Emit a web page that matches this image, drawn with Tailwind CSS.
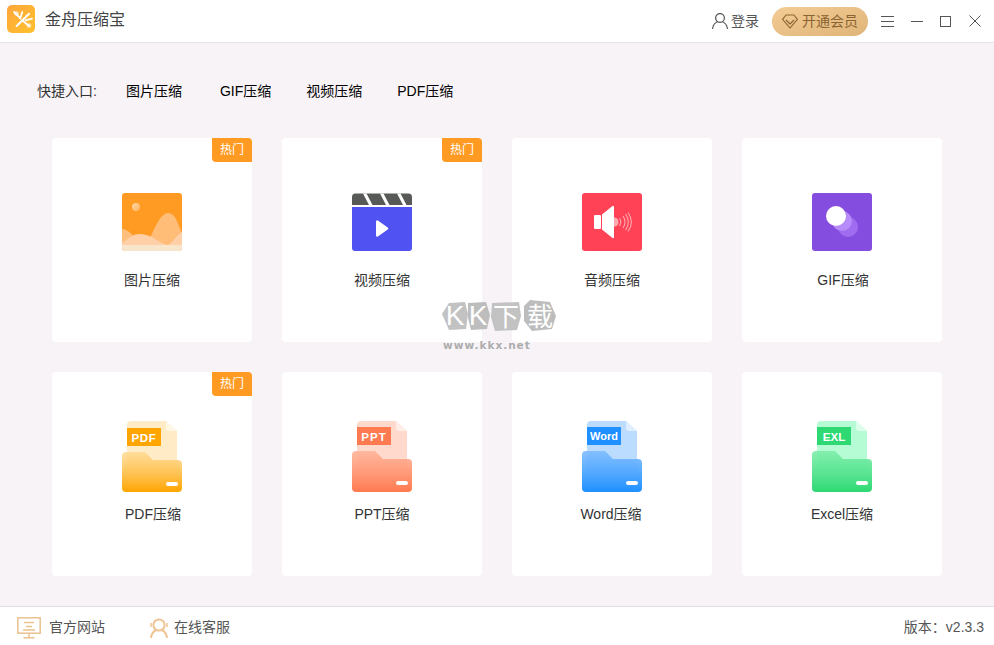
<!DOCTYPE html>
<html lang="zh-CN">
  <head>
    <meta charset="UTF-8" />
    <meta name="viewport" content="width=device-width, initial-scale=1.0" />
    <title>金舟压缩宝</title>
    <script src="https://cdn.jsdelivr.net/npm/@tailwindcss/browser@4"></script>
  </head>
  <body class="m-0 bg-[#f7f3f7] font-['Liberation_Sans','Noto_Sans_CJK_SC',sans-serif] text-[14px] text-[#333]">
    <div class="relative flex h-[645px] w-[994px] flex-col overflow-hidden">
      <!-- title bar -->
      <header class="flex h-[43px] shrink-0 items-center border-b border-[#e6e2e6] bg-white">
        <div class="ml-[7px] h-[28px] w-[28px] -translate-y-[2px] rounded-[5px] bg-gradient-to-br from-[#ffa63a] to-[#ffc12e]">
          <svg width="28" height="28" viewBox="0 0 28 28" fill="none" stroke="#fff" stroke-linecap="round">
            <circle cx="9.500" cy="8.500" r="2.300" fill="#ffe3b8" stroke="none" />
            <circle cx="22" cy="20.500" r="2.300" fill="#ffe3b8" stroke="none" />
            <path d="M7 7l6.700 6.700M15.500 15.500l6.500 5.500" stroke-width="1.800" />
            <path d="M9.700 21L22 8.700" stroke-width="2" />
            <path d="M15.300 7l-1.600 5M25 13.700l-6.300 1.600" stroke-width="1.800" />
          </svg>
        </div>
        <div class="ml-[10px] -translate-y-[1px] text-[16px] text-[#444]">金舟压缩宝</div>
        <div class="ml-auto flex items-center">
          <svg width="18" height="18" viewBox="0 0 18 18" fill="none" stroke="#555" stroke-width="1.2">
            <circle cx="9" cy="6" r="4.400" />
            <path d="M1.500 17c.6-4.500 3.400-6.600 5-7M16.500 17c-.6-4.500-3.400-6.600-5-7" />
          </svg>
          <span class="ml-[2px] text-[#555]">登录</span>
          <div class="ml-[13px] flex h-[29px] w-[96px] items-center rounded-full bg-gradient-to-br from-[#f3cc95] to-[#dfb478] pl-[10px] text-[#8a6431]">
            <svg width="16" height="15" viewBox="0 0 16 15" fill="none" stroke="#8a6431" stroke-width="1.100" stroke-linejoin="round">
              <path d="M4 1h8l3.400 4.400L8 14 .6 5.400z" />
              <path d="M4 6l4 4 4-4" />
            </svg>
            <span class="ml-[4px]">开通会员</span>
          </div>
          <div class="ml-[13px] flex h-[11px] w-[13px] flex-col justify-between">
            <div class="h-px bg-[#555]"></div>
            <div class="h-px bg-[#555]"></div>
            <div class="h-px bg-[#555]"></div>
          </div>
          <div class="ml-[17px] h-px w-[12px] bg-[#555]"></div>
          <div class="ml-[17px] h-[11px] w-[11px] border border-[#555]"></div>
          <svg class="ml-[18px] mr-[13px]" width="12" height="12" viewBox="0 0 12 12" stroke="#555" stroke-width="1">
            <path d="M.5.5l11 11M11.500.5l-11 11" />
          </svg>
        </div>
      </header>

      <!-- main -->
      <main class="flex-1">
        <div class="mt-[38px] ml-[37px] flex h-[20px] items-center text-black">
          <span class="mr-[29px] text-[#333]">快捷入口:</span>
          <span class="mr-[38px]">图片压缩</span>
          <span class="mr-[35px]">GIF压缩</span>
          <span class="mr-[35px]">视频压缩</span>
          <span>PDF压缩</span>
        </div>

        <div class="mt-[37px] ml-[52px] grid grid-cols-[repeat(4,200px)] grid-rows-[repeat(2,204px)] gap-[30px]">
          <!-- image -->
          <div class="relative flex flex-col items-center rounded-[4px] bg-white">
            <div class="absolute top-0 right-0 flex h-[24px] w-[40px] items-center justify-center rounded-tr-[4px] rounded-bl-[4px] bg-[#ff9a23] text-[12px] text-white">热门</div>
            <div class="h-[132px] pt-[55px]">
              <svg width="60" height="58" viewBox="0 0 60 58">
                <defs>
                  <clipPath id="imgClip"><rect width="60" height="58" rx="3" /></clipPath>
                  <linearGradient id="sunGrad" x1="0" y1="0" x2="1" y2="1">
                    <stop offset="0" stop-color="#ffd9a8" />
                    <stop offset="1" stop-color="#ffb25a" />
                  </linearGradient>
                </defs>
                <g clip-path="url(#imgClip)">
                  <rect width="60" height="58" fill="#ff9a23" />
                  <circle cx="14" cy="14" r="4" fill="url(#sunGrad)" />
                  <path d="M22 54C30 46 36 20 46 20c8 0 10 12 14 20v14z" fill="#ffbd78" />
                  <path d="M0 36c8 0 12 10 22 16v2H0z" fill="#ffbf7c" />
                  <path d="M0 50c6-4 10-9 18-9 12 0 18 9 32 13H0z" fill="#ffd0a8" />
                  <path d="M42 54c8-2 12-12 18-15v15z" fill="#ffd0a8" />
                  <rect y="52" width="60" height="6" fill="#f8e6cc" />
                </g>
              </svg>
            </div>
            <div class="h-[20px] leading-[20px]">图片压缩</div>
          </div>

          <!-- video -->
          <div class="relative flex flex-col items-center rounded-[4px] bg-white">
            <div class="absolute top-0 right-0 flex h-[24px] w-[40px] items-center justify-center rounded-tr-[4px] rounded-bl-[4px] bg-[#ff9a23] text-[12px] text-white">热门</div>
            <div class="h-[132px] pt-[55px]">
              <svg width="60" height="58" viewBox="0 0 60 58">
                <path d="M0 12V4a3.500 3.500 0 0 1 3.500-3.500H56.500A3.500 3.500 0 0 1 60 4v8z" fill="#585a58" />
                <path d="M11 .5h3.500l6 11.500H17zM28 .5h3.500l6 11.500H34zM45 .5h3.500l6 11.500H51z" fill="#fff" />
                <path d="M0 14h60v41a3 3 0 0 1-3 3H3a3 3 0 0 1-3-3z" fill="#5052f2" />
                <path d="M24 28.500a1.200 1.200 0 0 1 1.900-1l9.800 7a1.200 1.200 0 0 1 0 2l-9.800 7a1.200 1.200 0 0 1-1.900-1z" fill="#fff" />
              </svg>
            </div>
            <div class="h-[20px] leading-[20px]">视频压缩</div>
          </div>

          <!-- audio -->
          <div class="flex flex-col items-center rounded-[4px] bg-white">
            <div class="h-[132px] pt-[55px]">
              <svg width="60" height="58" viewBox="0 0 60 58" fill="none">
                <rect width="60" height="58" rx="3" fill="#ff4255" />
                <rect x="12" y="22" width="7" height="14" rx="1" fill="#fff" />
                <path d="M20 21.500L30.500 13a1 1 0 0 1 1.500 1v30a1 1 0 0 1-1.500 1L20 36.500z" fill="#fff" />
                <path d="M32 24.500c3 0 4.500 2 4.500 4.500s-1.500 4.500-4.500 4.500z" fill="#ffa9b1" />
                <path d="M37.500 25c1.600 2.500 1.600 5.500 0 8M41 23c2.600 3.800 2.600 8.200 0 12M43.500 21c3.600 5 3.600 11 0 16M46 19.500c4.300 6 4.300 13 0 19" stroke="#ffa9b1" stroke-width="1.100" />
              </svg>
            </div>
            <div class="h-[20px] leading-[20px]">音频压缩</div>
          </div>

          <!-- gif -->
          <div class="flex flex-col items-center rounded-[4px] bg-white">
            <div class="h-[132px] pt-[55px]">
              <svg width="60" height="58" viewBox="0 0 60 58">
                <rect width="60" height="58" rx="3" fill="#844ddf" />
                <circle cx="36" cy="34" r="10" fill="#a06df0" />
                <circle cx="30" cy="28" r="10" fill="#b68bfa" />
                <circle cx="24" cy="23" r="10" fill="#fff" />
              </svg>
            </div>
            <div class="h-[20px] leading-[20px] pl-[2px]">GIF压缩</div>
          </div>

          <!-- pdf -->
          <div class="relative flex flex-col items-center rounded-[4px] bg-white">
            <div class="absolute top-0 right-0 flex h-[24px] w-[40px] items-center justify-center rounded-tr-[4px] rounded-bl-[4px] bg-[#ff9a23] text-[12px] text-white">热门</div>
            <div class="h-[132px] pt-[49px]">
              <svg width="60" height="72" viewBox="0 0 60 72">
                <defs>
                  <linearGradient id="pdfGrad" x1="0" y1="0" x2="0" y2="1">
                    <stop offset="0" stop-color="#ffd990" stop-opacity=".8" />
                    <stop offset="1" stop-color="#ffa500" />
                  </linearGradient>
                </defs>
                <path d="M9 0h35l11 10v40H5V4a4 4 0 0 1 4-4z" fill="#ffecc6" />
                <path d="M44 0l11 10h-8a3 3 0 0 1-3-3z" fill="#fff6e4" />
                <rect x="5" y="7" width="34" height="18" fill="#ffa500" />
                <text x="22" y="20.500" text-anchor="middle" fill="#fff" font-family="Liberation Sans" font-weight="700" font-size="11.500" letter-spacing=".6">PDF</text>
                <path d="M0 35a4 4 0 0 1 4-4h19l8 8h25a4 4 0 0 1 4 4v24a4 4 0 0 1-4 4H4a4 4 0 0 1-4-4z" fill="url(#pdfGrad)" />
                <rect x="44" y="61" width="12" height="4" rx="2" fill="#fff" />
              </svg>
            </div>
            <div class="h-[20px] leading-[20px] pl-[2px]">PDF压缩</div>
          </div>

          <!-- ppt -->
          <div class="flex flex-col items-center rounded-[4px] bg-white">
            <div class="h-[132px] pt-[49px]">
              <svg width="60" height="72" viewBox="0 0 60 72">
                <defs>
                  <linearGradient id="pptGrad" x1="0" y1="0" x2="0" y2="1">
                    <stop offset="0" stop-color="#ffb49a" stop-opacity=".9" />
                    <stop offset="1" stop-color="#ff7a50" />
                  </linearGradient>
                </defs>
                <path d="M9 0h35l11 10v40H5V4a4 4 0 0 1 4-4z" fill="#ffd9cc" />
                <path d="M44 0l11 10h-8a3 3 0 0 1-3-3z" fill="#ffeee8" />
                <rect x="5" y="6" width="34" height="18" fill="#ff7a50" />
                <text x="22" y="19.500" text-anchor="middle" fill="#fff" font-family="Liberation Sans" font-weight="700" font-size="11.500" letter-spacing="1">PPT</text>
                <path d="M0 34a4 4 0 0 1 4-4h19l8 8h25a4 4 0 0 1 4 4v25a4 4 0 0 1-4 4H4a4 4 0 0 1-4-4z" fill="url(#pptGrad)" />
                <rect x="44" y="60" width="12" height="4" rx="2" fill="#fff" />
              </svg>
            </div>
            <div class="h-[20px] leading-[20px]">PPT压缩</div>
          </div>

          <!-- word -->
          <div class="flex flex-col items-center rounded-[4px] bg-white">
            <div class="h-[132px] pt-[49px]">
              <svg width="60" height="72" viewBox="0 0 60 72">
                <defs>
                  <linearGradient id="wordGrad" x1="0" y1="0" x2="0" y2="1">
                    <stop offset="0" stop-color="#7fbcff" stop-opacity=".9" />
                    <stop offset="1" stop-color="#1e90ff" />
                  </linearGradient>
                </defs>
                <path d="M9 0h35l11 10v40H5V4a4 4 0 0 1 4-4z" fill="#bbdcff" />
                <path d="M44 0l11 10h-8a3 3 0 0 1-3-3z" fill="#e0efff" />
                <rect x="5" y="6" width="34" height="18" fill="#1e90ff" />
                <text x="22" y="19" text-anchor="middle" fill="#fff" font-family="Liberation Sans" font-weight="700" font-size="11">Word</text>
                <path d="M0 34a4 4 0 0 1 4-4h19l8 8h25a4 4 0 0 1 4 4v25a4 4 0 0 1-4 4H4a4 4 0 0 1-4-4z" fill="url(#wordGrad)" />
                <rect x="44" y="60" width="12" height="4" rx="2" fill="#fff" />
              </svg>
            </div>
            <div class="h-[20px] leading-[20px] pr-[2px]">Word压缩</div>
          </div>

          <!-- excel -->
          <div class="flex flex-col items-center rounded-[4px] bg-white">
            <div class="h-[132px] pt-[49px]">
              <svg width="60" height="72" viewBox="0 0 60 72">
                <defs>
                  <linearGradient id="excelGrad" x1="0" y1="0" x2="0" y2="1">
                    <stop offset="0" stop-color="#7eeeaa" stop-opacity=".9" />
                    <stop offset="1" stop-color="#2ed974" />
                  </linearGradient>
                </defs>
                <path d="M9 0h35l11 10v40H5V4a4 4 0 0 1 4-4z" fill="#b5fcd4" />
                <path d="M44 0l11 10h-8a3 3 0 0 1-3-3z" fill="#dcfeea" />
                <rect x="5" y="6" width="34" height="18" fill="#2ed974" />
                <text x="22" y="19.500" text-anchor="middle" fill="#fff" font-family="Liberation Sans" font-weight="700" font-size="11.500">EXL</text>
                <path d="M0 34a4 4 0 0 1 4-4h19l8 8h25a4 4 0 0 1 4 4v25a4 4 0 0 1-4 4H4a4 4 0 0 1-4-4z" fill="url(#excelGrad)" />
                <rect x="44" y="60" width="12" height="4" rx="2" fill="#fff" />
              </svg>
            </div>
            <div class="h-[20px] leading-[20px]">Excel压缩</div>
          </div>
        </div>
      </main>

      <!-- footer -->
      <footer class="flex h-[39px] shrink-0 items-center border-t border-[#e3e0e3] bg-white pt-[3px] text-[#555]">
        <svg class="ml-[17px]" width="24" height="22" viewBox="0 0 24 22" fill="none" stroke="#e9c290" stroke-width="1.500">
          <rect x=".8" y=".8" width="22.400" height="15.400" />
          <path d="M7 5.500h10M9 9.500h6M6 13h12M12 16v4M6.500 20.800h11" />
        </svg>
        <span class="ml-[8px]">官方网站</span>
        <svg class="ml-[45px]" width="18" height="22" viewBox="0 0 18 22" fill="none" stroke="#efc493" stroke-width="2">
          <circle cx="9" cy="8" r="5.600" />
          <path d="M1 21c.5-4.500 3-7 5-8M17 21c-.5-4.500-3-7-5-8" />
          <path d="M1 6v4M17 6v4" stroke-width="1.500" />
        </svg>
        <span class="ml-[6px]">在线客服</span>
        <span class="mr-[10px] ml-auto">版本：v2.3.3</span>
      </footer>

      <!-- watermark -->
      <div class="pointer-events-none absolute top-[294px] left-[440px]">
        <svg width="118" height="60" viewBox="0 0 118 60">
          <g transform="translate(0 4)">
            <path d="M2 16L9 5l16-1 3 12-2 15-17 1z" fill="#c2c2c2" />
            <path d="M28 5l18-1 4 13-3 14-16 1-3-12z" fill="#bdbdbd" />
            <path d="M52 5l27-1 2 14-4 14-22 1-4-14z" fill="#c2c2c2" />
            <path d="M84 8l6-6 20 2 6 14-4 13-20 2-8-10z" fill="#bdbdbd" />
            <text x="15" y="27" text-anchor="middle" fill="#fff" font-family="Liberation Sans" font-size="28">K</text>
            <text x="38" y="27" text-anchor="middle" fill="#fff" font-family="Liberation Sans" font-size="28">K</text>
            <text x="66" y="28" text-anchor="middle" fill="#fff" font-family="Noto Sans CJK SC" font-size="26">下</text>
            <text x="100" y="28" text-anchor="middle" fill="#fff" font-family="Noto Sans CJK SC" font-size="26">载</text>
            <text x="3" y="51" fill="#adadad" font-family="DejaVu Sans" font-weight="700" font-size="10.500" letter-spacing="1">www.kkx.net</text>
          </g>
        </svg>
      </div>
    </div>
  </body>
</html>
